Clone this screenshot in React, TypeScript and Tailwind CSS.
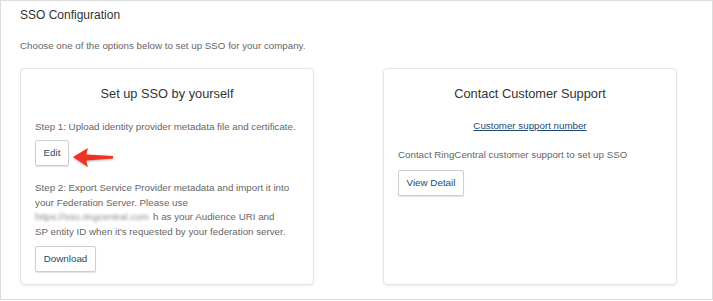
import React from "react";

function Btn({ label, w }: { label: string; w: string }) {
  return (
    <button
      className={`h-[26px] ${w} rounded-[2px] border border-[#cfcfcf] bg-white text-[9.8px] leading-none text-[#1d4a74] shadow-[0_1px_1px_rgba(0,0,0,0.12)]`}
    >
      {label}
    </button>
  );
}

export default function App() {
  return (
    <div
      className="relative h-[300px] w-[713px] border border-[#dcdcdc] bg-white px-[19px] pt-[6px]"
      style={{ fontFamily: '"Liberation Sans", Arial, sans-serif' }}
    >
      <div className="text-[12px] leading-[16px] text-[#333]">SSO Configuration</div>
      <div className="mt-[16px] text-[9.75px] leading-[14px] text-[#666]">
        Choose one of the options below to set up SSO for your company.
      </div>
      <div className="mt-[15px] flex gap-[69px]">
        {/* Left card */}
        <div className="relative flex h-[217px] w-[294px] flex-col rounded-[4px] border border-[#e4e4e4] px-[14px] pt-[17px] shadow-[0_1px_2px_rgba(0,0,0,0.08)]">
          <div className="text-center text-[12.8px] leading-[16px] text-[#333]">Set up SSO by yourself</div>
          <div className="mt-[17px] whitespace-nowrap text-[9.75px] leading-[15px] text-[#666]">
            Step 1: Upload identity provider metadata file and certificate.
          </div>
          <div className="mt-[5px]">
            <Btn label="Edit" w="w-[34px]" />
          </div>
          <div className="mt-[15px] whitespace-nowrap text-[9.75px] leading-[14.7px] text-[#666]">
            Step 2: Export Service Provider metadata and import it into
            <br />
            your Federation Server. Please use
            <br />
            <span className="inline-block w-[118px] overflow-hidden whitespace-nowrap align-bottom text-[#888] blur-[1.4px]">
              https://sso.ringcentral.com
            </span>
            h as your Audience URI and
            <br />
            SP entity ID when it's requested by your federation server.
          </div>
          <div className="mt-[5px]">
            <Btn label="Download" w="w-[61px]" />
          </div>
          <svg
            className="absolute left-[51px] top-[77px]"
            width="44"
            height="24"
            viewBox="0 0 44 24"
            style={{ filter: "drop-shadow(0 1px 1px rgba(0,0,0,0.3))" }}
          >
            <path
              d="M1,11 L16,2 C15,5 14.5,7 14.5,8.5 L41,10 L41,12.5 L14.5,14.5 C14.5,16 15,18 16,21 Z"
              fill="#ee3322"
            />
          </svg>
        </div>
        {/* Right card */}
        <div className="flex h-[217px] w-[294px] flex-col rounded-[4px] border border-[#e4e4e4] px-[14px] pt-[17px] shadow-[0_1px_2px_rgba(0,0,0,0.08)]">
          <div className="text-center text-[12.8px] leading-[16px] text-[#333]">Contact Customer Support</div>
          <div className="mt-[16px] text-center text-[9.75px] leading-[15px]">
            <a className="text-[#1d4a74] underline">Customer support number</a>
          </div>
          <div className="mt-[14px] text-[9.75px] leading-[15px] text-[#666]">
            Contact RingCentral customer support to set up SSO
          </div>
          <div className="mt-[7px]">
            <Btn label="View Detail" w="w-[66px]" />
          </div>
        </div>
      </div>
    </div>
  );
}
